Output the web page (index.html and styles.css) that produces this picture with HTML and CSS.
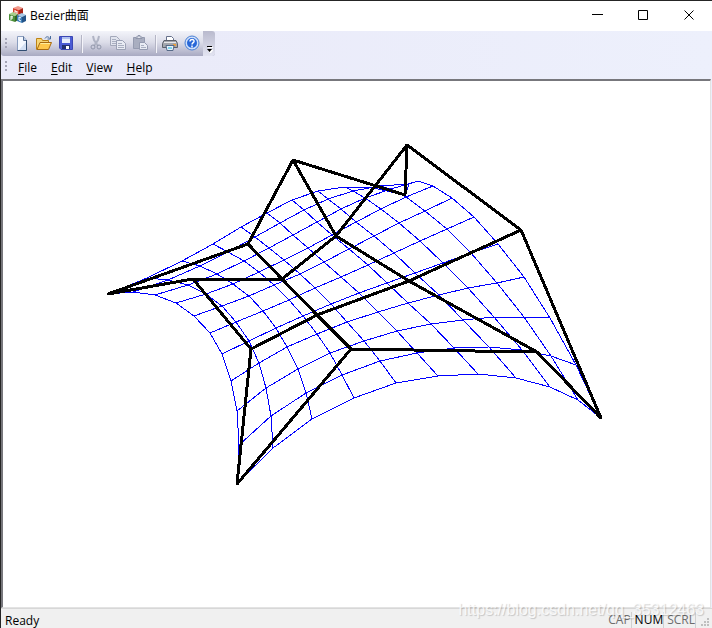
FILE: index.html
```html
<!DOCTYPE html>
<html lang="en">
<head>
  <meta charset="UTF-8">
  <meta name="viewport" content="width=device-width, initial-scale=1.0">
  <title>Bezier曲面</title>
  <link rel="stylesheet" href="styles.css">
</head>
<body>
  <div class="window">
    <header class="titlebar">
      <svg class="app-icon" width="18" height="18" viewBox="0 0 18 18">
        <path d="M4 2l5-2 5 2-4 2z" fill="#f29a8c"/>
        <path d="M4 2l6 2v6l-6-2z" fill="#d8402c"/>
        <path d="M10 4l4-2v6l-4 2z" fill="#a82418"/>
        <path d="M0 8l4-2 5 2-3 2z" fill="#a9cf8c"/>
        <path d="M0 8l6 2v6l-6-2z" fill="#4c8f38"/>
        <path d="M6 10l3-2v6l-3 2z" fill="#2f6424"/>
        <path d="M8 9l5-2 4 2-4 2z" fill="#a8cbe8"/>
        <path d="M8 9l5 2v6l-5-2z" fill="#3a7db8"/>
        <path d="M13 11l4-2v6l-4 2z" fill="#245488"/>
        <path d="M6 4v3M8 5v3M6 5l2 1M2 14v-4l2 1M2 12h2M12 12l-2-1v3l2 1" fill="none" stroke="#fff"/>
      </svg>
      <h1>Bezier曲面</h1>
      <button type="button" class="caption-btn" aria-label="Minimize">
        <svg width="11" height="11"><path d="M0 4.5h11" stroke="#000"/></svg>
      </button>
      <button type="button" class="caption-btn" aria-label="Maximize">
        <svg width="11" height="11"><path d="M.5.5h9v9h-9z" fill="none" stroke="#000"/></svg>
      </button>
      <button type="button" class="caption-btn" aria-label="Close">
        <svg width="11" height="11"><path d="M.5.5l9 9M9.5.5l-9 9" stroke="#000"/></svg>
      </button>
    </header>

    <div class="rebar">
      <div class="toolbar" role="toolbar" aria-label="Standard">
        <span class="grip"></span>
        <button type="button" aria-label="New">
          <svg width="16" height="16">
            <path d="M3.5 1.5h6l3 4v10h-9z" fill="#f4f8ff" stroke="#8a9dbf"/>
            <path d="M5 15L12 7v8z" fill="#d3e0f4"/>
            <path d="M9.5 1.5v4h3" fill="#b9cbe6" stroke="#5a7094"/>
            <path d="M12.500 5v10.500h-9" fill="none" stroke="#304d72"/>
          </svg>
        </button>
        <button type="button" aria-label="Open">
          <svg width="16" height="16">
            <path d="M.5 14.5v-11h5l1 2h6v3" fill="#f6d576" stroke="#bd8214"/>
            <path d="M1 14.5l3-7h11.500l-3 7z" fill="#ffc84c" stroke="#a86b12"/>
            <path d="M4.5 8.5H14" stroke="#ffed9c"/>
            <path d="M9 3.500c1-2 3-2.500 5 0M14.500 1v3h-3" fill="none" stroke="#476b9c"/>
          </svg>
        </button>
        <button type="button" aria-label="Save">
          <svg width="16" height="16">
            <path d="M1.500 1.500h13v13H3l-1.500-1.500z" fill="#4a5bd4" stroke="#3a46b4"/>
            <path d="M4 2h8v6H4z" fill="#e8eefc"/>
            <path d="M4 2h8v2H4z" fill="#b0c0ee"/>
            <path d="M4 10h8v4H4z" fill="#22306f"/>
            <path d="M8 11h3v3H8z" fill="#fff"/>
          </svg>
        </button>
        <span class="separator"></span>
        <button type="button" disabled aria-label="Cut">
          <svg width="16" height="16">
            <path d="M5 1l1 4 4 6M11 1l-1 4-4 6" fill="none" stroke="#b0b4c4" stroke-width="2"/>
            <circle cx="5" cy="12" r="2" fill="none" stroke="#9096aa"/>
            <circle cx="11" cy="12" r="2" fill="none" stroke="#9096aa"/>
          </svg>
        </button>
        <button type="button" disabled aria-label="Copy">
          <svg width="16" height="16">
            <path d="M.5 1.5h6l3 3v6h-9z" fill="#e1e4ee" stroke="#a3a8ba"/>
            <path d="M2 4.5h4M2 6.5h4M2 8.5h4" stroke="#a9afc1"/>
            <path d="M6.5 5.5h6l3 3v6h-9z" fill="#e8ebf3" stroke="#9ba1b5"/>
            <path d="M8 8.5h4M8 10.5h6M8 12.5h6" stroke="#a9afc1"/>
          </svg>
        </button>
        <button type="button" disabled aria-label="Paste">
          <svg width="16" height="16">
            <path d="M1.500 2.500h11v11h-11z" fill="#a9aec0" stroke="#959bb0"/>
            <path d="M4 3.500V2h2V.5h2V2h2v1.500z" fill="#dfe2eb" stroke="#8f95aa"/>
            <path d="M7.500 7.500h5l3 3v4h-8z" fill="#e8ebf3" stroke="#959bb0"/>
            <path d="M9 10.500h3M9 12.500h5" stroke="#a9afc1"/>
          </svg>
        </button>
        <span class="separator"></span>
        <button type="button" aria-label="Print">
          <svg width="16" height="16">
            <path d="M4.5 7.5v-6h5l2 2v4z" fill="#fff" stroke="#66708a"/>
            <path d="M2 5.500h12l1.500 3v4h-15v-4z" fill="#a4a6ad" stroke="#5c606b"/>
            <path d="M2 7.5h12" stroke="#e8e8ea"/>
            <path d="M11 9h3v2h-3z" fill="#eda13c"/>
            <path d="M4 10.5h8l-1 5H5z" fill="#e9f3fc" stroke="#566a88"/>
            <path d="M6 12h4v2H6z" fill="#7fd5ee"/>
          </svg>
        </button>
        <button type="button" aria-label="Help">
          <svg width="16" height="16">
            <circle cx="8" cy="8" r="6" fill="#2867d8" stroke="#cfe0fa" stroke-width="2"/>
            <circle cx="8" cy="8" r="7" fill="none" stroke="#4a80d4"/>
            <path d="M6 6.500c0-3 4.500-2.500 4 0-.3 1.200-2 1.200-2 3M8 10.500v2" fill="none" stroke="#fff" stroke-width="1.500"/>
          </svg>
        </button>
        <button type="button" class="overflow" aria-label="Toolbar options">
          <svg width="7" height="8"><path d="M2 2.500h5M2 5h5L4.500 8z" fill="#fff" stroke="#fff"/><path d="M1 1.500h5" stroke="#000"/><path d="M1 4h5L3.500 7z"/></svg>
        </button>
      </div>
      <nav class="menubar">
        <span class="grip"></span>
        <button type="button"><u>F</u>ile</button>
        <button type="button"><u>E</u>dit</button>
        <button type="button"><u>V</u>iew</button>
        <button type="button"><u>H</u>elp</button>
      </nav>
    </div>

    <main class="view">
      <svg class="surface" role="img" aria-label="Bezier surface">
        <path id="mesh"/>
        <path id="net"/>
      </svg>
    </main>

    <footer class="statusbar">
      <span class="message">Ready</span>
      <span class="pane off">CAP</span>
      <span class="pane">NUM</span>
      <span class="pane off">SCRL</span>
      <svg class="size-grip" width="8" height="8">
        <path d="M6 0h2v2H6zM3 3h2v2H3zM6 3h2v2H6zM0 6h2v2H0zM3 6h2v2H3zM6 6h2v2H6z" fill="#bfbfbf"/>
      </svg>
    </footer>
    <div class="watermark">https://blog.csdn.net/qq_35312463</div>
  </div>
  <script src="surface.js"></script>
</body>
</html>
```

FILE: styles.css
```css
* {
  box-sizing: border-box;
}
body, h1 {
  margin: 0;
}
body {
  font-family: "Open Sans", "Noto Sans CJK SC", sans-serif;
  font-size: 12px;
  color: #000;
}
button {
  margin: 0;
  padding: 0;
  border: 0;
  background: none;
  font: inherit;
  color: inherit;
}
.window {
  position: relative;
  display: flex;
  flex-direction: column;
  height: 100vh;
  border-top: 1px solid #252525;
  border-left: 1px solid #252525;
  background-color: #eceefb;
}

/* title bar */
.titlebar {
  display: flex;
  align-items: center;
  height: 30px;
  padding-bottom: 2px;
  padding-left: 8px;
  background-color: #fff;
}
.app-icon {
  margin-right: 3px;
}
.titlebar h1 {
  flex: 1;
  font-size: 12px;
  font-weight: 400;
}
.caption-btn {
  display: flex;
  align-items: center;
  justify-content: center;
  width: 46px;
  height: 28px;
}

/* toolbar and menu */
.rebar {
  height: 48px;
  background: linear-gradient(to right, #e9e9f8, #edf0fc);
}
.toolbar {
  display: flex;
  align-items: center;
  width: max-content;
  height: 25px;
  padding-left: 4px;
  border-radius: 3px;
  background: linear-gradient(#f3f4fa, #dcdde9 45%, #a9aac2);
}
.toolbar button {
  display: flex;
  align-items: center;
  justify-content: center;
  width: 22px;
  height: 24px;
  padding-bottom: 2px;
}
.grip {
  width: 2px;
  height: 12px;
  margin-right: 4px;
  background: repeating-linear-gradient(#a2a2b4 0 2px, transparent 2px 4px);
}
.separator {
  width: 1px;
  height: 18px;
  margin: 0 3px 0 4px;
  background-color: #b4b5c5;
  box-shadow: 1px 0 #f4f4fa;
}
.toolbar .overflow {
  align-items: flex-end;
  width: 12px;
  height: 25px;
  padding-bottom: 3px;
  border-radius: 0 3px 3px 0;
  background: linear-gradient(#b9bacd, #e3e4f2);
}
.menubar {
  display: flex;
  align-items: center;
  height: 22px;
  padding-left: 4px;
}
.menubar button {
  padding: 0 7px;
}
.menubar u {
  text-underline-offset: 2px;
}

/* drawing area */
.view {
  flex: 1;
  min-height: 0;
  margin-right: 1px;
  border-style: solid;
  border-width: 2px 1px 1px 2px;
  border-color: #77777c #e3e3e3 #e3e3e3 #77777c;
  background-color: #fff;
}
.surface {
  display: block;
  width: 100%;
  height: 100%;
  fill: none;
  shape-rendering: crispEdges;
}
#mesh {
  stroke: #00f;
  stroke-width: 1px;
}
#net {
  stroke: #000;
  stroke-width: 3px;
  stroke-linecap: round;
  stroke-linejoin: round;
}

/* status bar */
.statusbar {
  display: flex;
  align-items: center;
  height: 20px;
  padding: 3px 3px 0 4px;
  border-top: 1px solid #d7d7d7;
  background-color: #f0f0f0;
}
.message {
  flex: 1;
}
.pane {
  padding-left: 3px;
  border-right: 1px solid #d0d0d0;
  line-height: 16px;
}
.off {
  color: #6d6d6d;
}
.size-grip {
  align-self: flex-end;
  margin: 0 0 2px 5px;
}
.watermark {
  position: absolute;
  right: 8px;
  bottom: 8px;
  font-family: "Liberation Sans", sans-serif;
  font-size: 16px;
  line-height: 20px;
  color: rgba(255, 255, 255, 0.8);
  text-shadow: 1px 1px 1px rgba(0, 0, 0, 0.18);
  pointer-events: none;
}
```

FILE: surface.js
```js
// 4x4 control points of the bicubic surface
const points = [
  [[105, 213], [190, 198], [248, 268], [234, 403]],
  [[245, 163], [279, 198], [314, 234], [348, 268]],
  [[290, 79], [333, 155], [406, 200], [534, 271]],
  [[402, 114], [404, 64], [518, 149], [598, 337]]
]
const STEPS = 10

const bernstein = t => {
  const s = 1 - t
  return [s * s * s, 3 * t * s * s, 3 * t * t * s, t * t * t]
}

const surfacePoint = (u, v) => {
  const bu = bernstein(u)
  const bv = bernstein(v)
  let x = 0
  let y = 0
  points.forEach((row, i) => {
    row.forEach((p, j) => {
      x += bu[i] * bv[j] * p[0]
      y += bu[i] * bv[j] * p[1]
    })
  })
  return [Math.round(x), Math.round(y)]
}

const polyline = list => 'M' + list.map(p => p.join(' ')).join('L')

const grid = []
for (let i = 0; i <= STEPS; i++) {
  grid.push([])
  for (let j = 0; j <= STEPS; j++) {
    grid[i].push(surfacePoint(i / STEPS, j / STEPS))
  }
}

const bothWays = rows => {
  const columns = rows[0].map((_, j) => rows.map(row => row[j]))
  return rows.concat(columns).map(polyline).join('')
}

document.getElementById('mesh').setAttribute('d', bothWays(grid))
document.getElementById('net').setAttribute('d', bothWays(points))
```
